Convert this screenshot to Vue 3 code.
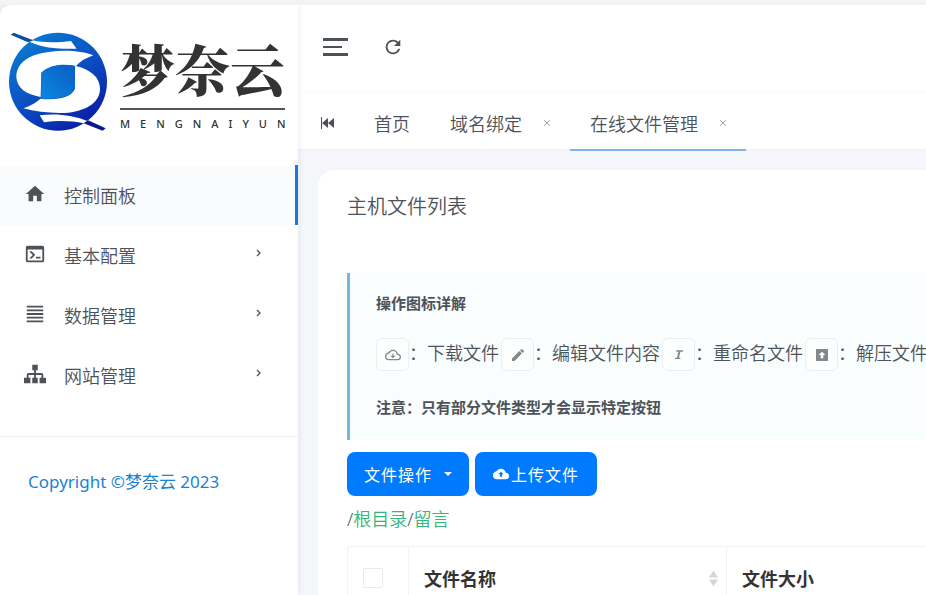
<template>
  <div class="layout">
    <aside class="sidebar">
      <a class="logo" href="#">
        <svg class="logo-mark" viewBox="24 90 300 309" aria-hidden="true">
          <defs>
            <linearGradient id="markFill" x1="0.1" y1="0" x2="0.8" y2="1">
              <stop offset="0" stop-color="#0a80d4" />
              <stop offset="0.5" stop-color="#0b52c4" />
              <stop offset="1" stop-color="#0a18a4" />
            </linearGradient>
            <linearGradient id="markCore" x1="1" y1="0" x2="0" y2="1">
              <stop offset="0" stop-color="#0a5cc6" />
              <stop offset="1" stop-color="#0b88de" />
            </linearGradient>
          </defs>
          <circle cx="174" cy="245" r="147" fill="url(#markFill)" />
          <g fill="#fff">
            <path d="M280 166C235 147 155 148 102 166C64 180 48 206 49 232C51 264 78 284 122 291L124 218C150 194 188 190 228 198C240 184 258 174 280 166Z" />
            <path d="M225 197C272 208 301 232 300 268C299 306 262 332 205 338C160 341 110 336 70 325C94 316 108 308 121 296C170 302 218 292 225 264Z" />
            <path d="M90 126L98 121C135 130 180 127 213 123L230 146C185 148 130 145 90 126Z" />
            <path d="M119 346C170 340 222 346 264 364L252 370C212 362 172 361 132 367Z" />
          </g>
          <path d="M124 218C148 196 190 191 225 198V264C216 292 172 298 124 296Z" fill="url(#markCore)" />
          <path d="M32 104L41 98L100 121L84 127Z" fill="#0b4fa0" />
          <path d="M251 370L264 361L317 385L308 392Z" fill="#0d1691" />
        </svg>
        <span class="logo-text">
          <strong>梦奈云</strong>
          <small>MENGNAIYUN</small>
        </span>
      </a>

      <nav class="menu">
        <a
          v-for="item in menu"
          :key="item.label"
          href="#"
          class="menu-item"
          :class="{ active: item.active }"
        >
          <svg class="menu-icon" viewBox="0 0 24 24"><path :d="item.icon" /></svg>
          <span class="menu-label">{{ item.label }}</span>
          <svg v-if="!item.active" class="menu-arrow" viewBox="0 0 8 8">
            <path d="M2 1L5 4L2 7" />
          </svg>
        </a>
      </nav>

      <p class="copyright">
        <a href="#">Copyright ©梦奈云 2023</a>
      </p>
    </aside>

    <div class="main">
      <header class="topbar">
        <button type="button" class="icon-btn toggle" aria-label="菜单">
          <span></span>
          <span></span>
          <span></span>
        </button>
        <button type="button" class="icon-btn" aria-label="刷新">
          <svg class="refresh" viewBox="0 0 24 24"><path :d="icons.refresh" /></svg>
        </button>
      </header>

      <div class="tabs">
        <button type="button" class="icon-btn tabs-prev" aria-label="向左">
          <svg viewBox="0 0 13 12"><path d="M0 0h1v12H0zM7 1v10L1 6zM13 1v10L7 6z" /></svg>
        </button>
        <a
          v-for="tab in tabs"
          :key="tab.label"
          href="#"
          class="tab"
          :class="{ active: tab.active }"
        >
          {{ tab.label }}
          <svg v-if="tab.closable" class="tab-close" viewBox="0 0 6 6">
            <path d="M0 0L6 6M6 0L0 6" />
          </svg>
        </a>
      </div>

      <main class="content">
        <section class="card">
          <h1 class="card-title">主机文件列表</h1>

          <div class="callout">
            <h2>操作图标详解</h2>
            <div class="legend">
              <template v-for="op in legend" :key="op.label">
                <button type="button" class="legend-btn" :aria-label="op.label">
                  <svg viewBox="0 0 24 24"><path :d="op.icon" /></svg>
                </button>
                <span class="legend-label">&#xFF1A;{{ op.label }}</span>
              </template>
            </div>
            <h2>注意&#xFF1A;只有部分文件类型才会显示特定按钮</h2>
          </div>

          <div class="actions">
            <button type="button" class="btn">
              文件操作
              <span class="caret"></span>
            </button>
            <button type="button" class="btn btn-upload">
              <svg viewBox="0 0 24 24"><path :d="icons.upload" /></svg>
              上传文件
            </button>
          </div>

          <div class="path">/<a href="#">根目录</a>/<a href="#">留言</a></div>

          <table class="files">
            <thead>
              <tr>
                <th class="col-check">
                  <input type="checkbox" aria-label="全选" />
                </th>
                <th class="col-name">
                  <div class="th-inner">
                    文件名称
                    <svg class="sort" viewBox="0 0 10 18">
                      <path d="M5 0L10 8H0zM5 18L0 10H10z" />
                    </svg>
                  </div>
                </th>
                <th class="col-size">文件大小</th>
              </tr>
            </thead>
          </table>
        </section>
      </main>
    </div>
  </div>
</template>

<script setup>
const icons = {
  refresh:
    "M17.65,6.35C16.2,4.9 14.21,4 12,4A8,8 0 0,0 4,12A8,8 0 0,0 12,20C15.73,20 18.84,17.45 19.73,14H17.65C16.83,16.33 14.61,18 12,18A6,6 0 0,1 6,12A6,6 0 0,1 12,6C13.66,6 15.14,6.69 16.22,7.78L13,11H20V4L17.65,6.35Z",
  upload:
    "M13.5,12.5V16H10.5V12.5H8L12,8.5L16,12.5M19.35,10.03C18.67,6.59 15.64,4 12,4C9.11,4 6.6,5.64 5.35,8.03C2.34,8.36 0,10.9 0,14A6,6 0 0,0 6,20H19A5,5 0 0,0 24,15C24,12.36 21.95,10.22 19.35,10.03Z",
};

const menu = [
  {
    label: "控制面板",
    active: true,
    icon: "M10,20V14H14V20H19V12H22L12,3L2,12H5V20H10Z",
  },
  {
    label: "基本配置",
    icon: "M20,19V7H4V19H20M20,3A2,2 0 0,1 22,5V19A2,2 0 0,1 20,21H4A2,2 0 0,1 2,19V5C2,3.89 2.9,3 4,3H20M13,17V15H18V17H13M9.58,13L5.57,9H8.4L11.7,12.3C12.09,12.69 12.09,13.33 11.7,13.72L8.42,17H5.59L9.58,13Z",
  },
  {
    label: "数据管理",
    icon: "M3,3H21V5H3ZM3,7H21V9H3ZM3,11H21V13H3ZM3,15H21V17H3ZM3,19H21V21H3Z",
  },
  {
    label: "网站管理",
    icon: "M9,2V8H11V11H5C3.89,11 3,11.89 3,13V16H0V22H7V16H5V13H11V16H9V22H15V16H13V13H19V16H17V22H24V16H21V13C21,11.89 20.11,11 19,11H13V8H15V2H9Z",
  },
];

const tabs = [
  { label: "首页" },
  { label: "域名绑定", closable: true },
  { label: "在线文件管理", closable: true, active: true },
];

const legend = [
  {
    label: "下载文件",
    icon: "M13,10V13H16L12,17L8,13H11V10H13M19.35,10.04C18.67,6.59 15.64,4 12,4C9.11,4 6.61,5.64 5.36,8.04C2.35,8.36 0,10.9 0,14A6,6 0 0,0 6,20H19A5,5 0 0,0 24,15C24,12.36 21.95,10.22 19.35,10.04M19,18H6A4,4 0 0,1 2,14C2,11.95 3.53,10.24 5.56,10.03L6.63,9.92L7.13,8.97C8.08,7.14 9.94,6 12,6C14.62,6 16.88,7.86 17.39,10.43L17.69,11.93L19.22,12.04C20.78,12.14 22,13.45 22,15A3,3 0 0,1 19,18Z",
  },
  {
    label: "编辑文件内容",
    icon: "M20.71,7.04C21.1,6.65 21.1,6 20.71,5.63L18.37,3.29C18,2.9 17.35,2.9 16.96,3.29L15.12,5.12L18.87,8.87M3,17.25V21H6.75L17.81,9.93L14.06,6.18L3,17.25Z",
  },
  {
    label: "重命名文件",
    icon: "M8,5V7H11L9,16H6V18H14V16H12L14,7H18V5H8Z",
  },
  {
    label: "解压文件",
    icon: "M4,3H20A1,1 0 0,1 21,4V20A1,1 0 0,1 20,21H4A1,1 0 0,1 3,20V4A1,1 0 0,1 4,3ZM12,7L7,12H10V17H14V12H17Z",
  },
];
</script>

<style>
body {
  margin: 0;
  background: #f5f6fa;
}
</style>

<style scoped>
.layout {
  display: flex;
  box-sizing: border-box;
  height: 100vh;
  overflow: hidden;
  border-top: 5px solid #f3f3f4;
  background: #f3f3f4;
  color: #4d5259;
  font-family: "Noto Sans", "Noto Sans CJK SC", sans-serif;
  font-size: 18px;
  font-weight: 350;
}

a {
  color: inherit;
  text-decoration: none;
}

button {
  padding: 0;
  border: 0;
  background: none;
  color: inherit;
  font: inherit;
}

svg {
  display: block;
  fill: currentColor;
  fill-rule: evenodd;
}

/* sidebar */
.sidebar {
  position: relative;
  z-index: 1;
  flex: 0 0 298px;
  border-radius: 10px 0 0 0;
  background: #fff;
  box-shadow: 0 0 6px rgba(80, 90, 120, 0.14);
}

.logo {
  display: flex;
  align-items: center;
  gap: 12px;
  box-sizing: border-box;
  height: 160px;
  padding: 0 8px 8px;
}

.logo-mark {
  flex: none;
  width: 100px;
  height: 103px;
}

.logo-text {
  display: flex;
  flex-direction: column;
  padding-top: 8px;
  color: #333;
  white-space: nowrap;
}

.logo-text strong {
  padding-bottom: 10px;
  border-bottom: 2px solid #555;
  font-family: "Noto Serif CJK SC", "Noto Sans CJK SC", serif;
  font-size: 55px;
  font-weight: 900;
  line-height: 60px;
}

.logo-text small {
  font-family: "Noto Sans", sans-serif;
  font-size: 11px;
  font-weight: 500;
  letter-spacing: 10px;
  line-height: 16px;
  margin-top: 6px;
  width: 165px;
}

.menu {
  padding-bottom: 31px;
  border-bottom: 1px solid #f0f0f1;
}

.menu-item {
  display: flex;
  align-items: center;
  box-sizing: border-box;
  height: 60px;
  padding: 0 32px 0 24px;
  border-right: 3px solid transparent;
}

.menu-item.active {
  border-right-color: #1779dc;
  background: #fafbfc;
}

.menu-icon {
  width: 22px;
  height: 22px;
  margin-right: 18px;
  padding-bottom: 3px;
}

.menu-label {
  flex: 1;
}

.menu-arrow {
  width: 8px;
  height: 8px;
  padding-bottom: 4px;
  fill: none;
  stroke: currentColor;
  stroke-width: 1.3;
}

.copyright {
  margin: 32px 28px;
  color: #1b82d2;
  font-size: 17px;
  font-weight: 400;
  line-height: 26px;
}

/* main column */
.main {
  display: flex;
  flex: 1;
  flex-direction: column;
  min-width: 0;
  background: #f4f6fa;
}

.topbar {
  display: flex;
  flex: none;
  align-items: center;
  gap: 34px;
  box-sizing: border-box;
  height: 88px;
  padding: 0 25px 4px;
  border-bottom: 1px solid #fafafa;
  background: #fff;
}

.icon-btn {
  display: flex;
}

.toggle {
  flex-direction: column;
  gap: 5px;
  width: 25px;
}

.toggle span {
  width: 25px;
  height: 3px;
  background: #4d5259;
}

.toggle span:nth-child(2) {
  width: 19px;
  height: 2px;
}

.refresh {
  width: 22px;
  height: 22px;
}

.tabs {
  display: flex;
  flex: none;
  height: 56px;
  background: #fff;
  border-bottom: 1px solid #f0f1f4;
}

.tabs-prev {
  align-items: center;
  width: 56px;
  padding: 4px 0 0 23px;
}

.tabs-prev svg {
  width: 13px;
  height: 12px;
}

.tab {
  display: flex;
  align-items: center;
  gap: 22px;
  padding: 4px 20px 0;
  white-space: nowrap;
}

.tab.active {
  box-shadow: 0 2px 0 #7fb1ea;
}

.tab-close {
  width: 6px;
  height: 6px;
  fill: none;
  stroke: #a5a8ac;
  stroke-width: 1;
}

.content {
  display: flex;
  flex: 1;
  padding: 20px 0 0 20px;
}

.card {
  flex: 1;
  min-width: 0;
  padding: 22px 0 0 29px;
  border-radius: 16px 0 0 0;
  background: #fff;
}

.card-title {
  margin: 0 0 51px;
  font-size: 20px;
  font-weight: 350;
  line-height: 30px;
}

.callout {
  overflow: hidden;
  padding: 19px 0 22px 26px;
  border-left: 3px solid #6fb8e8;
  background: #fafdfd;
}

.callout h2 {
  margin: 0;
  font-size: 15px;
  font-weight: 700;
  line-height: 22px;
}

.legend {
  display: flex;
  align-items: center;
  gap: 2px;
  padding: 24px 0 25px;
}

.legend-btn {
  display: flex;
  flex: none;
  align-items: center;
  justify-content: center;
  box-sizing: border-box;
  width: 33px;
  height: 33px;
  border: 1px solid #ebeef0;
  border-radius: 6px;
  background: #fdfefe;
  color: #85878c;
}

.legend-btn svg {
  width: 16px;
  height: 16px;
}

.legend-label {
  margin-left: -2px;
  padding-bottom: 6px;
  white-space: nowrap;
}

.actions {
  display: flex;
  align-items: center;
  gap: 6px;
  padding-top: 12px;
}

.btn {
  display: flex;
  align-items: center;
  justify-content: center;
  gap: 12px;
  width: 122px;
  height: 44px;
  border-radius: 8px;
  background: #007bff;
  color: #fff;
  font-size: 16px;
  font-weight: 400;
  letter-spacing: 1px;
}

.btn-upload {
  gap: 2px;
}

.btn-upload svg {
  width: 16px;
  height: 16px;
}

.caret {
  border: 4px solid transparent;
  border-top-color: #fff;
  border-bottom: 0;
}

.path {
  padding: 9px 0 13px;
  line-height: 28px;
}

.path a {
  color: #33b77d;
}

.files {
  width: 100%;
  border-collapse: collapse;
  table-layout: fixed;
}

.files th {
  height: 62px;
  padding: 0 15px;
  border: 1px solid #f2f3f4;
  color: #333;
  font-weight: 700;
  text-align: left;
}

.files .col-check {
  width: 30px;
}

.files .col-name {
  width: 294px;
  padding-right: 8px;
}

.files .col-size {
  border-right: 0;
}

.col-check input {
  display: block;
  width: 20px;
  height: 20px;
  margin: 0;
  border: 1px solid #e9eaec;
  border-radius: 2px;
  background: #fff;
  appearance: none;
}

.th-inner {
  display: flex;
  align-items: center;
  justify-content: space-between;
}

.sort {
  width: 9px;
  height: 17px;
  color: #d6d6d6;
}
</style>
